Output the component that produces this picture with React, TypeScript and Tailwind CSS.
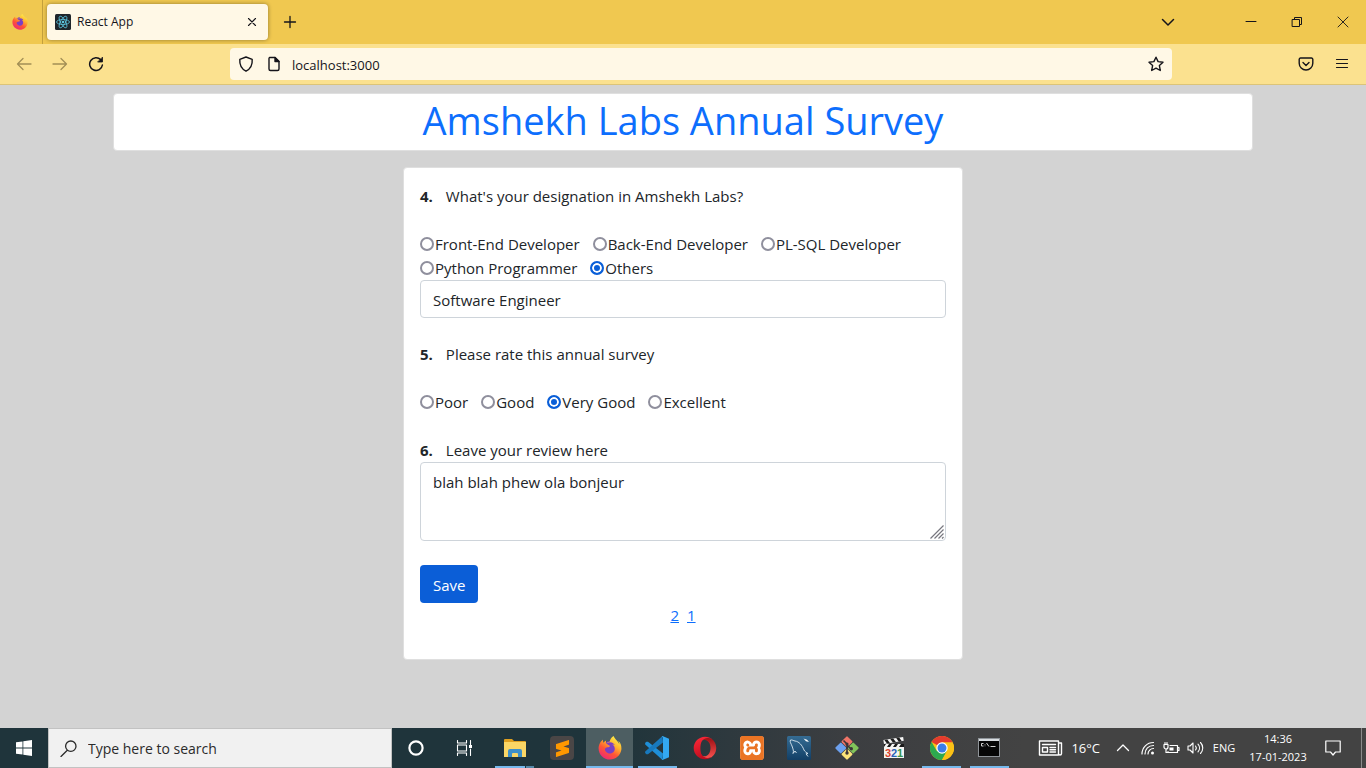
import React, { useState } from "react";
import { FaFirefoxBrowser } from "react-icons/fa";
import { SiXampp, SiSublimetext } from "react-icons/si";

function FirefoxLogo({ id, size }: { id: string; size: number }) {
  return (
    <svg width={size} height={size} viewBox="0 0 24 24" aria-hidden="true">
      <defs>
        <linearGradient id={id} x1="0.8" y1="0.05" x2="0.25" y2="0.95">
          <stop offset="0" stopColor="#fff14a" />
          <stop offset="0.35" stopColor="#ffb02e" />
          <stop offset="0.65" stopColor="#ff5634" />
          <stop offset="1" stopColor="#f02a72" />
        </linearGradient>
      </defs>
      <circle cx="12" cy="12" r="7" fill="#7a3fc4" />
      <FaFirefoxBrowser size={24} x={0} y={0} fill={`url(#${id})`} />
    </svg>
  );
}

function ReactLogo() {
  return (
    <svg width="16" height="16" viewBox="0 0 32 32" aria-hidden="true">
      <rect width="32" height="32" rx="3" fill="#20262b" />
      <g fill="none" stroke="#5cc5de" strokeWidth="1.6">
        <ellipse cx="16" cy="16" rx="13" ry="5" />
        <ellipse cx="16" cy="16" rx="13" ry="5" transform="rotate(60 16 16)" />
        <ellipse cx="16" cy="16" rx="13" ry="5" transform="rotate(120 16 16)" />
      </g>
      <circle cx="16" cy="16" r="2.6" fill="#5cc5de" />
    </svg>
  );
}

function Glyph({
  d,
  w = 16,
  h = 16,
  sw = 1.4,
  children,
}: {
  d?: string;
  w?: number;
  h?: number;
  sw?: number;
  children?: React.ReactNode;
}) {
  return (
    <svg
      width={w}
      height={h}
      viewBox={`0 0 ${w} ${h}`}
      fill="none"
      stroke="currentColor"
      strokeWidth={sw}
      strokeLinecap="round"
      strokeLinejoin="round"
      aria-hidden="true"
    >
      {d && <path d={d} />}
      {children}
    </svg>
  );
}

function TabStrip() {
  return (
    <div className="flex h-11 items-center bg-[#f0c850] text-[#15141a]">
      <button aria-label="Firefox View" className="flex h-11 w-[43px] items-center justify-center border-r border-[#c3a03c] pr-0.5">
        <FirefoxLogo id="fx-view" size={16} />
      </button>
      <div className="ml-1 flex h-9 w-[221px] items-center rounded bg-[#fff8e6] pl-2 pr-2 shadow-[0_0_4px_rgba(0,0,0,0.4)]">
        <ReactLogo />
        <span className="ml-[6px] grow text-[12px] leading-4">React App</span>
        <button aria-label="Close tab" className="flex size-4 items-center justify-center">
          <Glyph w={10} h={10} sw={1.1} d="M1.5 1.5l7 7M8.5 1.5l-7 7" />
        </button>
      </div>
      <button aria-label="New tab" className="ml-[14px] flex size-4 items-center justify-center">
        <Glyph w={14} h={14} sw={1.3} d="M7 1.5v11M1.5 7h11" />
      </button>
      <div className="ml-auto flex items-center">
        <button aria-label="List all tabs" className="flex h-11 w-12 items-center justify-center">
          <Glyph w={14} h={14} sw={1.5} d="M1.5 4.5L7 10l5.500-5.500" />
        </button>
        <button aria-label="Minimize" className="ml-9 flex h-11 w-[46px] items-center justify-center">
          <Glyph w={12} h={12} sw={1} d="M1 5.500h10" />
        </button>
        <button aria-label="Restore" className="flex h-11 w-[46px] items-center justify-center">
          <Glyph w={12} h={12} sw={1} d="M1.500 3.500h7v7h-7zM3.500 3.500v-2h7v7h-2" />
        </button>
        <button aria-label="Close window" className="flex h-11 w-[46px] items-center justify-center">
          <Glyph w={12} h={12} sw={0.9} d="M1 1l10 10M11 1L1 11" />
        </button>
      </div>
    </div>
  );
}

function Toolbar() {
  return (
    <div className="flex h-[41px] items-center border-b border-[#dcc478] bg-[#fbe18f] text-[#15141a]">
      <div className="flex w-[230px] shrink-0 items-center gap-5 pl-4">
        <button aria-label="Back" className="text-[#a28f56]">
          <Glyph sw={1.3} d="M15 8H1.500M7 2.500L1.500 8L7 13.500" />
        </button>
        <button aria-label="Forward" className="text-[#a28f56]">
          <Glyph sw={1.3} d="M1 8h13.500M9 2.500L14.500 8L9 13.500" />
        </button>
        <button aria-label="Reload">
          <Glyph sw={1.5} d="M12.800 3.800A6.400 6.400 0 1 0 14.400 9">
            <path d="M14.500 1.500v4.500h-4.500z" fill="currentColor" strokeWidth="0.8" />
          </Glyph>
        </button>
      </div>
      <div className="flex h-8 grow items-center rounded bg-[#fff8e6] px-2">
        <Glyph sw={1.4} d="M8 1l6.200 2.400c.4 5.500-1.400 9.400-6.200 11.800C3.200 12.800 1.400 8.900 1.800 3.400z" />
        <span className="ml-3">
          <Glyph sw={1.4} d="M3.500 1.500h5.500l4 4v7.500a1.500 1.500 0 0 1-1.500 1.500h-7a1.500 1.500 0 0 1-1.500-1.500v-10a1.500 1.500 0 0 1 .5-1.500z">
            <path d="M9 1.500v4h4z" fill="currentColor" />
          </Glyph>
        </span>
        <input
          aria-label="Address"
          defaultValue="localhost:3000"
          className="ml-[10px] min-w-0 grow bg-transparent pt-0.5 text-[13px] leading-5 outline-none"
        />
        <button aria-label="Bookmark this page">
          <Glyph sw={1.4} d="M8 1.200l2.100 4.400 4.900.6-3.600 3.400.9 4.900L8 12.200l-4.300 2.300.9-4.900L1 6.200l4.900-.6z" />
        </button>
      </div>
      <div className="flex w-[194px] shrink-0 items-center justify-end gap-5 pr-4">
        <button aria-label="Save to Pocket">
          <Glyph sw={1.4} d="M2.500 2h11a1.300 1.300 0 0 1 1.300 1.300v3.900a6.800 6.800 0 0 1-13.600 0V3.300A1.300 1.300 0 0 1 2.500 2zM5 6.500l3 3 3-3" />
        </button>
        <button aria-label="Open application menu">
          <Glyph sw={1.2} d="M2.500 3.500h11M2.500 7.500h11M2.500 11.500h11" />
        </button>
      </div>
    </div>
  );
}

function RadioRow({ name, options, initial }: { name: string; options: string[]; initial: string }) {
  const [value, setValue] = useState(initial);
  return (
    <div className="flex flex-wrap gap-x-[13px]" role="radiogroup" aria-label={name}>
      {options.map((option) => (
        <label key={option} className="flex items-center gap-px">
          <input
            type="radio"
            name={name}
            checked={value === option}
            onChange={() => setValue(option)}
            className="size-[14px] appearance-none rounded-full border-2 border-[#8f8f9d] bg-white checked:border-[#0a5fd8] checked:bg-[#0a5fd8] checked:shadow-[inset_0_0_0_2px_#fff]"
          />
          {option}
        </label>
      ))}
    </div>
  );
}

function Question({ n, children }: { n: number; children: React.ReactNode }) {
  return (
    <div className="flex gap-[13px]">
      <b>{n}.</b>
      {children}
    </div>
  );
}

function Survey() {
  return (
    <main className="flex grow flex-col items-center gap-4 bg-[#d3d3d3] px-4 py-2 text-[#212529]">
      <header className="w-full max-w-[1140px] rounded border border-[#dfdfdf] bg-white pb-1.5 pt-0.5 text-center">
        <h1 className="text-[38px] leading-[48px] text-[#0d6efd]">Amshekh Labs Annual Survey</h1>
      </header>
      <form
        onSubmit={(e) => e.preventDefault()}
        className="w-full max-w-[560px] rounded border border-[#dfdfdf] bg-white px-4 pb-8 pt-4 text-[15px] leading-6"
      >
        <section className="mb-6">
          <div className="mb-6">
            <Question n={4}>
              <span>What's your designation in Amshekh Labs?</span>
            </Question>
          </div>
          <RadioRow
            name="designation"
            options={["Front-End Developer", "Back-End Developer", "PL-SQL Developer", "Python Programmer", "Others"]}
            initial="Others"
          />
          <input
            aria-label="Other designation"
            defaultValue="Software Engineer"
            className="block h-[38px] w-full rounded border border-[#ced4da] px-3 pt-0.5"
          />
        </section>
        <section className="mb-6">
          <div className="mb-6">
            <Question n={5}>
              <span>Please rate this annual survey</span>
            </Question>
          </div>
          <RadioRow name="rating" options={["Poor", "Good", "Very Good", "Excellent"]} initial="Very Good" />
        </section>
        <section className="mb-6">
          <Question n={6}>
            <label htmlFor="review">Leave your review here</label>
          </Question>
          <div className="relative">
            <textarea
              id="review"
              defaultValue="blah blah phew ola bonjeur"
              className="block h-[79px] w-full resize-none rounded border border-[#ced4da] px-3 py-[7px]"
            />
            <svg className="absolute bottom-px right-px" width="15" height="15" viewBox="0 0 15 15" stroke="#77777f" strokeWidth="1.2" aria-hidden="true">
              <path d="M0.500 13.500L13.500 .5M4.500 13.500l9-9M8.500 13.500l5-5M12 13.500l1.500-1.500" />
            </svg>
          </div>
        </section>
        <button type="submit" className="block h-[38px] rounded bg-[#0b5ed7] px-[13px] pt-0.5 text-white">
          Save
        </button>
        <nav aria-label="Pages" className="flex justify-center gap-2 text-[#0d6efd]">
          <a href="#2" className="underline">2</a>
          <a href="#1" className="underline">1</a>
        </nav>
      </form>
    </main>
  );
}

function ExplorerIcon() {
  return (
    <svg width="24" height="24" viewBox="0 0 24 24" aria-hidden="true">
      <path d="M1 4a1 1 0 0 1 1-1h7l2 2h11a1 1 0 0 1 1 1v15H1z" fill="#e0a020" />
      <path d="M1 6h22v15H1z" fill="#fbd665" />
      <path d="M5 21v-6a2 2 0 0 1 2-2h10a2 2 0 0 1 2 2v6h-4v-3a1 1 0 0 0-1-1h-4a1 1 0 0 0-1 1v3z" fill="#3e8fc8" />
    </svg>
  );
}

function VsCodeIcon() {
  return (
    <svg width="24" height="24" viewBox="0 0 24 24" aria-hidden="true">
      <path d="M17.500 24L18 17.500 3 5.700l-1.600.1L.1 7l.1 1.500z" fill="#1f8fd8" />
      <path d="M17.500 0L18 6.500 3 18.300l-1.600-.1-1.300-1.200.1-1.500z" fill="#1879bd" />
      <path d="M17.500 0L24 2.700v18.600L17.500 24l-1-1.200c.9.300 1.500-.2 1.500-1V2.200c0-.8-.6-1.300-1.500-1z" fill="#33a9f2" />
    </svg>
  );
}

function OperaIcon() {
  return (
    <svg width="24" height="24" viewBox="0 0 24 24" aria-hidden="true">
      <defs>
        <linearGradient id="opera-red" x1="0" y1="0" x2="0.3" y2="1">
          <stop offset="0" stopColor="#ff2a3a" />
          <stop offset="1" stopColor="#c00d1e" />
        </linearGradient>
        <linearGradient id="opera-side" x1="0" y1="0" x2="0" y2="1">
          <stop offset="0" stopColor="#9c0f14" />
          <stop offset="1" stopColor="#f9524f" />
        </linearGradient>
      </defs>
      <path fill="url(#opera-side)" d="M9 4c2-2.300 6-3 9.500-1.200a11.300 11.300 0 0 1 0 18.400C15 23 11 22.300 9 20c5 1.500 8.500-2.500 8.500-8S14 2.500 9 4z" />
      <path fillRule="evenodd" fill="url(#opera-red)" d="M12 .7C5.800.7.700 5.800.7 12s5.100 11.300 11.300 11.300c2.800 0 5.400-1 7.400-2.700-4 2.600-8.700 1.500-10.700-2-1.700-3-1.700-10.200 0-13.200 2-3.500 6.700-4.600 10.700-2C17.400 1.700 14.800.7 12 .7z" />
    </svg>
  );
}

function MySqlIcon() {
  return (
    <svg width="24" height="24" viewBox="0 0 24 24" aria-hidden="true">
      <defs>
        <linearGradient id="mysql-bg" x1="0" y1="0" x2="0" y2="1">
          <stop offset="0" stopColor="#356c93" />
          <stop offset="1" stopColor="#123f66" />
        </linearGradient>
      </defs>
      <rect width="24" height="24" rx="1.500" fill="url(#mysql-bg)" />
      <path d="M6 17.500C7 15 6 13 5 10 4 7.500 2.500 5.500 3.500 4c1.500-.5 3 .8 4.500 1C12 5.500 15 9 17 14c.7 1.600 2.500 2.500 4 3.500l-2 .3 2 2.700M6 17.500L8 15l1.500 2" fill="none" stroke="#dce9f2" strokeWidth="0.900" />
      <path d="M16.500 2.500l3.500 1.200L22 6l-3-.8z" fill="#fff" />
    </svg>
  );
}

function GitIcon() {
  return (
    <svg width="24" height="24" viewBox="0 0 24 24" aria-hidden="true">
      <g transform="rotate(45 12 12)">
        <rect x="3.500" y="3.500" width="8.200" height="8.200" rx="1" fill="#f07467" />
        <rect x="12.300" y="3.500" width="8.200" height="8.200" rx="1" fill="#82c35a" />
        <rect x="3.500" y="12.300" width="8.200" height="8.200" rx="1" fill="#6ca0ee" />
        <rect x="12.300" y="12.300" width="8.200" height="8.200" rx="1" fill="#fbe47a" />
      </g>
      <path d="M8.500 4.500L12 8v9M12 9l4 4" stroke="#3b3438" strokeWidth="1.600" fill="none" />
      <circle cx="12" cy="8" r="1.600" fill="#3b3438" />
      <circle cx="12" cy="17" r="1.700" fill="#3b3438" />
      <circle cx="16.300" cy="12.700" r="1.700" fill="#3b3438" />
    </svg>
  );
}

function ClapperIcon() {
  return (
    <svg width="24" height="24" viewBox="0 0 24 24" aria-hidden="true">
      <g transform="rotate(-9 2 8)">
        <rect x="2" y="4" width="20" height="4" fill="#f5f5f5" />
        <path d="M3 4h3l2 4H5zM9 4h3l2 4h-3zM15 4h3l2 4h-3z" fill="#1b1b1b" />
      </g>
      <rect x="2" y="8" width="20" height="14" fill="#f4f4f2" />
      <path d="M2 8h20v3H2z" fill="#1b1b1b" />
      <path d="M4 8h3l-2 3H2zM10 8h3l-2 3H8zM16 8h3l-2 3h-3z" fill="#f4f4f2" />
      <g fontFamily="Liberation Sans, sans-serif" fontWeight="700" fontSize="11">
        <text x="3" y="21" fill="#d9432f">3</text>
        <text x="9" y="21" fill="#2a62b8">2</text>
        <text x="15" y="21" fill="#35934a">1</text>
      </g>
    </svg>
  );
}

function ChromeIcon() {
  return (
    <svg width="24" height="24" viewBox="0 0 24 24" aria-hidden="true">
      <circle cx="12" cy="12" r="12" fill="#fbc116" />
      <path d="M12 12L1.600 6A12 12 0 0 1 22.400 6L22.400 6.500H12z" fill="#e33b2e" />
      <path d="M1.600 6A12 12 0 0 0 12 24L17 14.500 12 12 6.800 15z" fill="#2da94f" />
      <path d="M22.400 6A12 12 0 0 1 12 24l5.200-9L17 9l-5-2.500h10.600z" fill="#fbc116" />
      <circle cx="12" cy="12" r="5.700" fill="#fff" />
      <circle cx="12" cy="12" r="4.500" fill="#3b7de9" />
    </svg>
  );
}

function TerminalIcon() {
  return (
    <svg width="24" height="24" viewBox="0 0 24 24" aria-hidden="true">
      <rect x="1" y="2" width="22" height="19" fill="#8f9499" />
      <rect x="2" y="3" width="20" height="2" fill="#d9dde0" />
      <rect x="2" y="5" width="20" height="15" fill="#060606" />
      <path d="M6.500 7.500H4.500v2.500h2M8 8v.6M8 9.600v.6M9.500 7l2.500 3.500M13.500 10.500h5" stroke="#e6e6e6" strokeWidth="0.900" fill="none" />
    </svg>
  );
}

function TaskButton({ label, children, mark, active }: { label: string; children: React.ReactNode; mark?: "full" | "part" | "stack"; active?: boolean }) {
  return (
    <button
      aria-label={label}
      className={`flex h-10 flex-1 flex-col items-center pt-2 ${active ? "bg-[#4d5e62]" : ""}`}
    >
      {children}
      {mark === "full" && <span className="mt-auto h-[2px] w-full bg-[#76b9ed]" />}
      {mark === "part" && <span className="mt-auto h-[2px] w-[39px] bg-[#76b9ed]" />}
      {mark === "stack" && (
        <span className="mt-auto flex h-[2px] w-[39px] gap-px">
          <span className="grow bg-[#76b9ed]" />
          <span className="w-2 bg-[#5588a8]" />
        </span>
      )}
    </button>
  );
}

function Taskbar() {
  return (
    <footer className="flex h-10 items-center bg-linear-to-r from-[#1f343b] from-45% via-[#3c3e41] via-62% to-[#434343] to-75% text-white">
      <button aria-label="Start" className="flex h-10 w-12 shrink-0 items-center justify-center">
        <svg width="16" height="16" viewBox="0 0 16 16" fill="#fff" aria-hidden="true">
          <path d="M0 2.300L6.500 1.400v6.200H0zM7.300 1.300L16 0v7.600H7.300zM0 8.400h6.500v6.200L0 13.700zM7.300 8.400H16V16l-8.700-1.300z" />
        </svg>
      </button>
      <label className="flex h-10 w-[344px] shrink-0 items-center border border-[#c2c2c2] bg-[#f1f1f1] pl-[11px] text-[#2b2b2b]">
        <Glyph w={17} h={17} sw={1.3} d="M7.300 10.300L1 16.500M16 6.200a5.200 5.200 0 1 1-10.400 0a5.200 5.200 0 0 1 10.400 0z" />
        <input
          aria-label="Search"
          placeholder="Type here to search"
          className="ml-[11px] min-w-0 grow bg-transparent pt-0.5 text-[14px] leading-5 outline-none placeholder:text-[#2b2b2b]"
        />
      </label>
      <button aria-label="Cortana" className="flex h-10 w-12 shrink-0 items-center justify-center">
        <Glyph sw={2.2}>
          <circle cx="8" cy="8" r="6.600" />
        </Glyph>
      </button>
      <button aria-label="Task View" className="flex h-10 w-12 shrink-0 items-center justify-center">
        <Glyph w={17} h={16} sw={1.1} d="M1.500 .5v2.500h9V.5M1.500 5h9v6h-9zM1.500 15.500v-2.500h9v2.500M14.500 .5v4M14.500 9v6.500">
          <path d="M13 5h3v3h-3z" fill="currentColor" stroke="none" />
        </Glyph>
      </button>
      <div className="ml-[3px] flex w-[522px] shrink-0">
        <TaskButton label="File Explorer" mark="stack"><ExplorerIcon /></TaskButton>
        <TaskButton label="Sublime Text">
          <span className="flex size-6 items-center justify-center rounded-sm bg-[#4a4646] text-[#ff9800]">
            <SiSublimetext size={17} />
          </span>
        </TaskButton>
        <TaskButton label="Firefox" mark="full" active><FirefoxLogo id="fx-task" size={24} /></TaskButton>
        <TaskButton label="Visual Studio Code" mark="part"><VsCodeIcon /></TaskButton>
        <TaskButton label="Opera"><OperaIcon /></TaskButton>
        <TaskButton label="XAMPP">
          <span className="flex size-6 items-center justify-center rounded-sm bg-white text-[#ea7424]">
            <SiXampp size={24} />
          </span>
        </TaskButton>
        <TaskButton label="MySQL Workbench"><MySqlIcon /></TaskButton>
        <TaskButton label="Git Bash"><GitIcon /></TaskButton>
        <TaskButton label="Media Player Classic"><ClapperIcon /></TaskButton>
        <TaskButton label="Chrome" mark="part"><ChromeIcon /></TaskButton>
        <TaskButton label="Command Prompt" mark="part"><TerminalIcon /></TaskButton>
      </div>
      <div className="ml-auto flex shrink-0 items-center">
        <button aria-label="Weather" className="flex items-center gap-2 text-[13px] leading-5">
          <Glyph w={25} h={18} sw={1.4} d="M1.500 2h19v14h-19zM20.500 4h3v10.500a1.500 1.500 0 0 1-3 0M4.500 5.500h13M4.500 8.500h5v4.500h-5zM12 8.500h5.500M12 10.800h5.500M12 13h5.500" />
          16°C
        </button>
        <button aria-label="Show hidden icons" className="ml-4">
          <Glyph w={14} h={14} sw={1.3} d="M1.500 9.500L7 4l5.500 5.500" />
        </button>
        <button aria-label="Network" className="ml-[11px]">
          <Glyph w={14} h={14} sw={1.2} d="M1 13C1 6.500 6 1.500 12.500 1.500M4 13c0-5 3.500-8.500 8.500-8.500M7 13c0-3 2.500-5.500 5.500-5.500">
            <circle cx="11.500" cy="12" r="1.500" fill="currentColor" stroke="none" />
          </Glyph>
        </button>
        <button aria-label="Battery" className="ml-2">
          <Glyph w={17} h={14} sw={1.2} d="M5 10.500v1h9.500v-7H7M14.500 6.500h1.500v3h-1.500M1 3.500h4v2.500a2 2 0 0 1-4 0zM2 3.500v-2M4 3.500v-2M3 8v3.500h2">
            <path d="M6.500 6.500h4v3h-4z" fill="currentColor" stroke="none" />
          </Glyph>
        </button>
        <button aria-label="Volume" className="ml-[7px]">
          <Glyph w={17} h={14} sw={1.1} d="M1 5h2l3-3v10L3 9H1zM8.500 5c1 1.200 1 2.800 0 4M11 3.200c2 2.200 2 5.400 0 7.600M13.500 1.500c3 3.200 3 7.800 0 11" />
        </button>
        <button className="ml-2 w-6 text-center text-[11px] leading-4">ENG</button>
        <button className="ml-[10px] flex w-16 flex-col items-center text-[11px] leading-[18px]">
          <span>14:36</span>
          <span>17-01-2023</span>
        </button>
        <button aria-label="Notifications" className="ml-[15px] mr-5">
          <Glyph w={16} h={16} sw={1.2} d="M.8 1h14.400v11h-4.700L8 15l-2.500-3H.8z" />
        </button>
        <button aria-label="Show desktop" className="h-10 w-[5px] border-l border-[#8a8a8a]" />
      </div>
    </footer>
  );
}

export default function App() {
  return (
    <div className="flex min-h-screen flex-col font-['Open_Sans','Noto_Sans',sans-serif]">
      <TabStrip />
      <Toolbar />
      <Survey />
      <Taskbar />
    </div>
  );
}
